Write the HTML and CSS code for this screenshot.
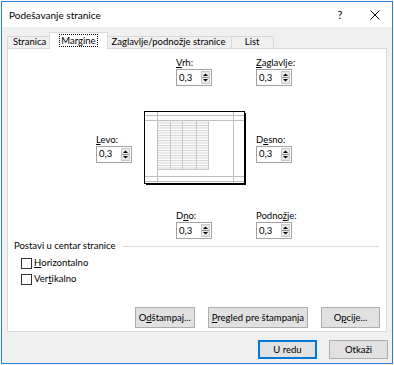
FILE: index.html
```html
<!DOCTYPE html>
<html lang="sr">
    <head>
        <meta charset="utf-8">
        <title>Podešavanje stranice</title>
        <link rel="stylesheet" href="styles.css">
    </head>
    <body>
        <div class="window">
            <header class="titlebar">
                <span class="title">Podešavanje stranice</span>
                <span class="caption-buttons">
                    <span class="help">?</span>
                    <span class="close">
                        <svg width="10" height="10" viewBox="0 0 10 10"><path d="M0.5 0.5 L9.5 9.5 M9.5 0.5 L0.5 9.5" stroke="#000" stroke-width="1" fill="none"/></svg>
                    </span>
                </span>
            </header>
            <div class="dialog">
                <nav class="tabs">
                    <span class="tab">Stranica</span>
                    <span class="tab active"><span class="focus">Margine</span></span>
                    <span class="tab">Zaglavlje/podnožje stranice</span>
                    <span class="tab">List</span>
                </nav>
                <section class="panel">
                    <div class="margins">
                        <div class="field top"><label><u>V</u>rh:</label>
                            <div class="spin"><span>0,3</span><svg class="arrows" width="9" height="13" viewBox="0 0 9 13"><rect x="0.5" y="0.5" width="8" height="12" fill="#e9e9e9" stroke="#c6c6c6"/><path d="M1 6.5 H8" stroke="#8c8c8c"/><polygon points="2,5 4.5,2.5 7,5" fill="#000"/><polygon points="2,8 7,8 4.5,10.5" fill="#000"/></svg></div>
                        </div>
                        <div class="field header"><label><u>Z</u>aglavlje:</label>
                            <div class="spin"><span>0,3</span><svg class="arrows" width="9" height="13" viewBox="0 0 9 13"><rect x="0.5" y="0.5" width="8" height="12" fill="#e9e9e9" stroke="#c6c6c6"/><path d="M1 6.5 H8" stroke="#8c8c8c"/><polygon points="2,5 4.5,2.5 7,5" fill="#000"/><polygon points="2,8 7,8 4.5,10.5" fill="#000"/></svg></div>
                        </div>
                        <div class="field left"><label><u>L</u>evo:</label>
                            <div class="spin"><span>0,3</span><svg class="arrows" width="9" height="13" viewBox="0 0 9 13"><rect x="0.5" y="0.5" width="8" height="12" fill="#e9e9e9" stroke="#c6c6c6"/><path d="M1 6.5 H8" stroke="#8c8c8c"/><polygon points="2,5 4.5,2.5 7,5" fill="#000"/><polygon points="2,8 7,8 4.5,10.5" fill="#000"/></svg></div>
                        </div>
                        <svg class="preview" width="104" height="76" viewBox="0 0 104 76">
                            <defs>
                                <pattern id="rows" width="4" height="2.5" patternUnits="userSpaceOnUse"><rect width="4" height="1" fill="#d2d2d2"/></pattern>
                            </defs>
                            <rect x="0.5" y="1.5" width="100" height="72" fill="#fff" stroke="#000"/>
                            <path d="M101.5 3 V75 M2 74.5 H102" stroke="#000"/>
                            <rect x="14" y="11" width="50" height="48" fill="url(#rows)"/>
                            <path d="M13.5 2 V73 M89.5 2 V73 M1 5.5 H100 M1 10.5 H100 M1 66.5 H100 M1 71.5 H100" stroke="#bdbdbd"/>
                            <path d="M26.5 10 V59 M38.5 10 V59 M52.5 10 V59 M64.5 10 V59 M13 59.5 H65" stroke="#c8c8c8"/>
                        </svg>
                        <div class="field right"><label>D<u>e</u>sno:</label>
                            <div class="spin"><span>0,3</span><svg class="arrows" width="9" height="13" viewBox="0 0 9 13"><rect x="0.5" y="0.5" width="8" height="12" fill="#e9e9e9" stroke="#c6c6c6"/><path d="M1 6.5 H8" stroke="#8c8c8c"/><polygon points="2,5 4.5,2.5 7,5" fill="#000"/><polygon points="2,8 7,8 4.5,10.5" fill="#000"/></svg></div>
                        </div>
                        <div class="field bottom"><label>D<u>n</u>o:</label>
                            <div class="spin"><span>0,3</span><svg class="arrows" width="9" height="13" viewBox="0 0 9 13"><rect x="0.5" y="0.5" width="8" height="12" fill="#e9e9e9" stroke="#c6c6c6"/><path d="M1 6.5 H8" stroke="#8c8c8c"/><polygon points="2,5 4.5,2.5 7,5" fill="#000"/><polygon points="2,8 7,8 4.5,10.5" fill="#000"/></svg></div>
                        </div>
                        <div class="field footer"><label>Podno<u>ž</u>je:</label>
                            <div class="spin"><span>0,3</span><svg class="arrows" width="9" height="13" viewBox="0 0 9 13"><rect x="0.5" y="0.5" width="8" height="12" fill="#e9e9e9" stroke="#c6c6c6"/><path d="M1 6.5 H8" stroke="#8c8c8c"/><polygon points="2,5 4.5,2.5 7,5" fill="#000"/><polygon points="2,8 7,8 4.5,10.5" fill="#000"/></svg></div>
                        </div>
                    </div>
                    <div class="center">
                        <p class="group-title"><span>Postavi u centar stranice</span><span class="rule"></span></p>
                        <label class="check"><span class="box"></span><u>H</u>orizontalno</label>
                        <label class="check"><span class="box"></span>Ver<u>t</u>ikalno</label>
                    </div>
                    <div class="panel-buttons">
                        <button>O<u>d</u>štampaj...</button>
                        <button><u>P</u>regled pre štampanja</button>
                        <button>O<u>p</u>cije...</button>
                    </div>
                </section>
                <footer class="dialog-buttons">
                    <button class="default">U redu</button>
                    <button>Otkaži</button>
                </footer>
            </div>
        </div>
    </body>
</html>
```

FILE: styles.css
```css
:root {
    --color-face: #f0f0f0;
    --color-border: #d9d9d9;
    --color-button: #e1e1e1;
    --color-button-border: #adadad;
    --color-accent: #0078d7;
    --color-window-border: #2b7fd4;
    --color-field-border: #a2a2a2;
    --color-rule: #dcdcdc;
}
* { margin: 0; padding: 0; box-sizing: border-box; }
html, body { height: 100%; }
body { background: #f7f7f7; font: 9.5px/12px Lato, "Noto Sans", sans-serif; color: #000; }
u { text-decoration: underline; text-underline-offset: 1px; }

.window {
    margin: 1px; height: 363px;
    border: 1px solid var(--color-window-border);
    display: flex; flex-direction: column;
    background: var(--color-face);
}
/* title bar */
.titlebar { height: 25px; background: #fff; display: flex; align-items: center; padding-left: 7px; font-size: 10px; }
.title { flex: auto; }
.caption-buttons { display: flex; align-items: center; gap: 8px; padding-right: 2px; }
.help { width: 24px; text-align: center; font-size: 11px; }
.close { width: 30px; display: flex; justify-content: center; }

/* dialog */
.dialog { flex: auto; display: flex; flex-direction: column; padding: 5px 4px 0 5px; }
.tabs { display: flex; align-items: flex-end; height: 16px; padding-right: 1px; }
.tab {
    height: 12px; min-width: 43px; padding: 0 5px; margin-right: -1px;
    line-height: 10px; text-align: center; white-space: nowrap;
    border: 1px solid var(--color-border); border-bottom: none;
    background: var(--color-face);
}
.tab.active {
    height: 17px; margin: 0 -1px -1px -2px; padding: 2px 10px 0 10px;
    line-height: 12px; background: #fff;
    position: relative; z-index: 1;
}
.tab.active + .tab { margin-left: -1px; }
.focus { outline: 1px dotted #000; padding: 0 1px; }

.panel {
    height: 284px; margin-right: 1px;
    background: #fff; border: 1px solid var(--color-border);
    display: flex; flex-direction: column;
}

/* margins layout */
.margins {
    margin: 8px 0 0 88px;
    display: grid; grid-template-columns: 48px 32px 80px auto;
    row-gap: 24px;
}
.field label { display: block; line-height: 12px; }
.field.top { grid-area: 1 / 3; }
.field.header { grid-area: 1 / 4; }
.field.left { grid-area: 2 / 1; align-self: center; }
.preview { grid-area: 2 / 2 / 3 / 4; display: block; }
.field.right { grid-area: 2 / 4; align-self: center; }
.field.bottom { grid-area: 3 / 3; }
.field.footer { grid-area: 3 / 4; }
.spin {
    width: 36px; height: 17px; padding: 0 1px 0 2px;
    border: 1px solid var(--color-field-border);
    display: flex; align-items: center; justify-content: space-between;
}
.arrows { display: block; }

/* center on page */
.center { margin-top: 1px; padding-left: 6px; }
.group-title { display: flex; align-items: center; }
.rule { flex: auto; height: 1px; background: var(--color-rule); margin: 1px 7px 0 6px; }
.check { display: flex; align-items: center; height: 16px; margin-left: 7px; }
.check:first-of-type { margin-top: 3px; }
.box { width: 11px; height: 11px; border: 1px solid #333; background: #fff; margin-right: 2px; }

/* buttons */
button {
    font: inherit; color: #000; height: 21px; min-width: 59px; padding: 0 3px;
    background: var(--color-button); border: 1px solid var(--color-button-border);
}
.panel-buttons { margin-top: auto; display: flex; justify-content: flex-end; gap: 13px; padding: 0 6px 3px 0; }
.dialog-buttons { display: flex; justify-content: flex-end; gap: 12px; margin-top: 8px; }
.dialog-buttons button { height: 19px; }
button.default { border-color: var(--color-accent); box-shadow: inset 0 0 0 1px var(--color-accent); }
```
